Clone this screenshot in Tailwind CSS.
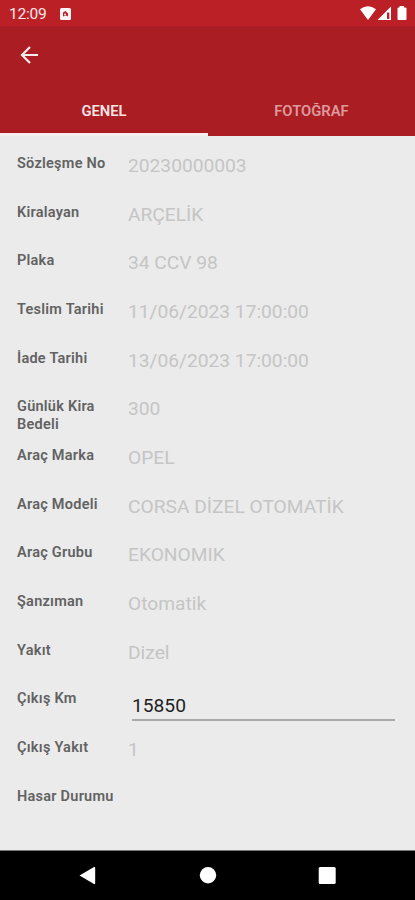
<!DOCTYPE html>
<html lang="tr">
<head>
<meta charset="utf-8">
<title>Sözleşme</title>
<script src="https://cdn.jsdelivr.net/npm/@tailwindcss/browser@4"></script>
</head>
<body class="bg-[#ebebeb] font-['Roboto',sans-serif]">
<div class="w-[415px] h-[900px] flex flex-col overflow-hidden">
  <div class="h-[26px] shrink-0 bg-[#bb2027] flex items-center pl-[9px] pr-[7px] text-white/90">
    <span class="text-[15.5px] leading-[26px] w-[37px] whitespace-nowrap pt-[2px] tracking-[-0.2px]">12:09</span>
    <svg class="ml-[14px] mt-[1px]" width="11" height="12" viewBox="0 0 11 12"><rect width="11" height="12" rx="1.5" fill="#fff" fill-opacity=".95"/><path d="M3 8.500V4.500L5.500 3L8 5.500V8.500L6 7.500Z" fill="#bb2027"/><circle cx="5" cy="6.500" r=".9" fill="#fff"/></svg>
    <svg class="ml-auto" width="48" height="16" viewBox="0 0 48 16" fill="#fff"><path d="M0 4.300Q8 -1.700 16 4.300L8 15Z"/><path fill-rule="evenodd" d="M17.500 15L31 1.500V15ZM27 7.500V14H29.300V7.500Z"/><path d="M39.500 1H44V2.500H45.500Q46.500 2.500 46.500 3.500V14Q46.500 15 45.500 15H38.500Q37.500 15 37.500 14V3.500Q37.500 2.500 38.500 2.500H39.500Z"/></svg>
  </div>
  <header class="h-[110px] shrink-0 bg-[#aa1d22] flex flex-col">
    <div class="h-[58px] shrink-0 flex items-center pl-[20px]">
      <svg width="20" height="18" viewBox="0 0 20 18" fill="none" stroke="#fff" stroke-opacity=".92" stroke-width="2.200"><path d="M18 9H2.500M10 1L2 9L10 17"/></svg>
    </div>
    <nav class="flex h-[52px] pb-px text-[14.8px] font-semibold text-center leading-[20px]">
      <div class="w-[208px] pt-[17px] border-b-[3px] border-[#f4eeee] text-[#f6e4e5] -mb-px">GENEL</div>
      <div class="flex-1 pt-[17px] text-[#dd9a9d]">FOTOĞRAF</div>
    </nav>
  </header>
  <main class="flex-1 pt-[18px] pl-[17px] pr-[20px] grid grid-cols-[111px_1fr] auto-rows-[48.67px] content-start text-[19.2px] leading-[24px] text-[#c5c5c5] [&>b]:pt-[1px] [&>b]:font-semibold [&>b]:text-[14.5px] [&>b]:leading-[17.700px] [&>b]:text-[#626262] [&>b]:tracking-[0.25px]">
    <b>Sözleşme No</b><span>20230000003</span>
    <b>Kiralayan</b><span>ARÇELİK</span>
    <b>Plaka</b><span>34 CCV 98</span>
    <b>Teslim Tarihi</b><span>11/06/2023 17:00:00</span>
    <b>İade Tarihi</b><span>13/06/2023 17:00:00</span>
    <b>Günlük Kira<br>Bedeli</b><span>300</span>
    <b>Araç Marka</b><span>OPEL</span>
    <b>Araç Modeli</b><span>CORSA DİZEL OTOMATİK</span>
    <b>Araç Grubu</b><span>EKONOMIK</span>
    <b>Şanzıman</b><span>Otomatik</span>
    <b>Yakıt</b><span>Dizel</span>
    <b>Çıkış Km</b><div class="ml-[4px] mt-[5px] h-[27px] border-b-2 border-[#a9a9a9] text-[#1f1f1f]">15850</div>
    <b>Çıkış Yakıt</b><span>1</span>
    <b class="whitespace-nowrap">Hasar Durumu</b><span></span>
  </main>
  <footer class="h-[50px] shrink-0 bg-black border-t border-[#777]">
    <svg width="415" height="49" viewBox="0 0 415 49" fill="#fff"><path d="M79.500 24.500L94 16Q95.200 15.500 95.200 17V32Q95.200 33.500 94 33Z"/><circle cx="208" cy="24.300" r="8.200"/><rect x="318.700" y="16" width="17" height="17" rx="1.500"/></svg>
  </footer>
</div>
</body>
</html>
